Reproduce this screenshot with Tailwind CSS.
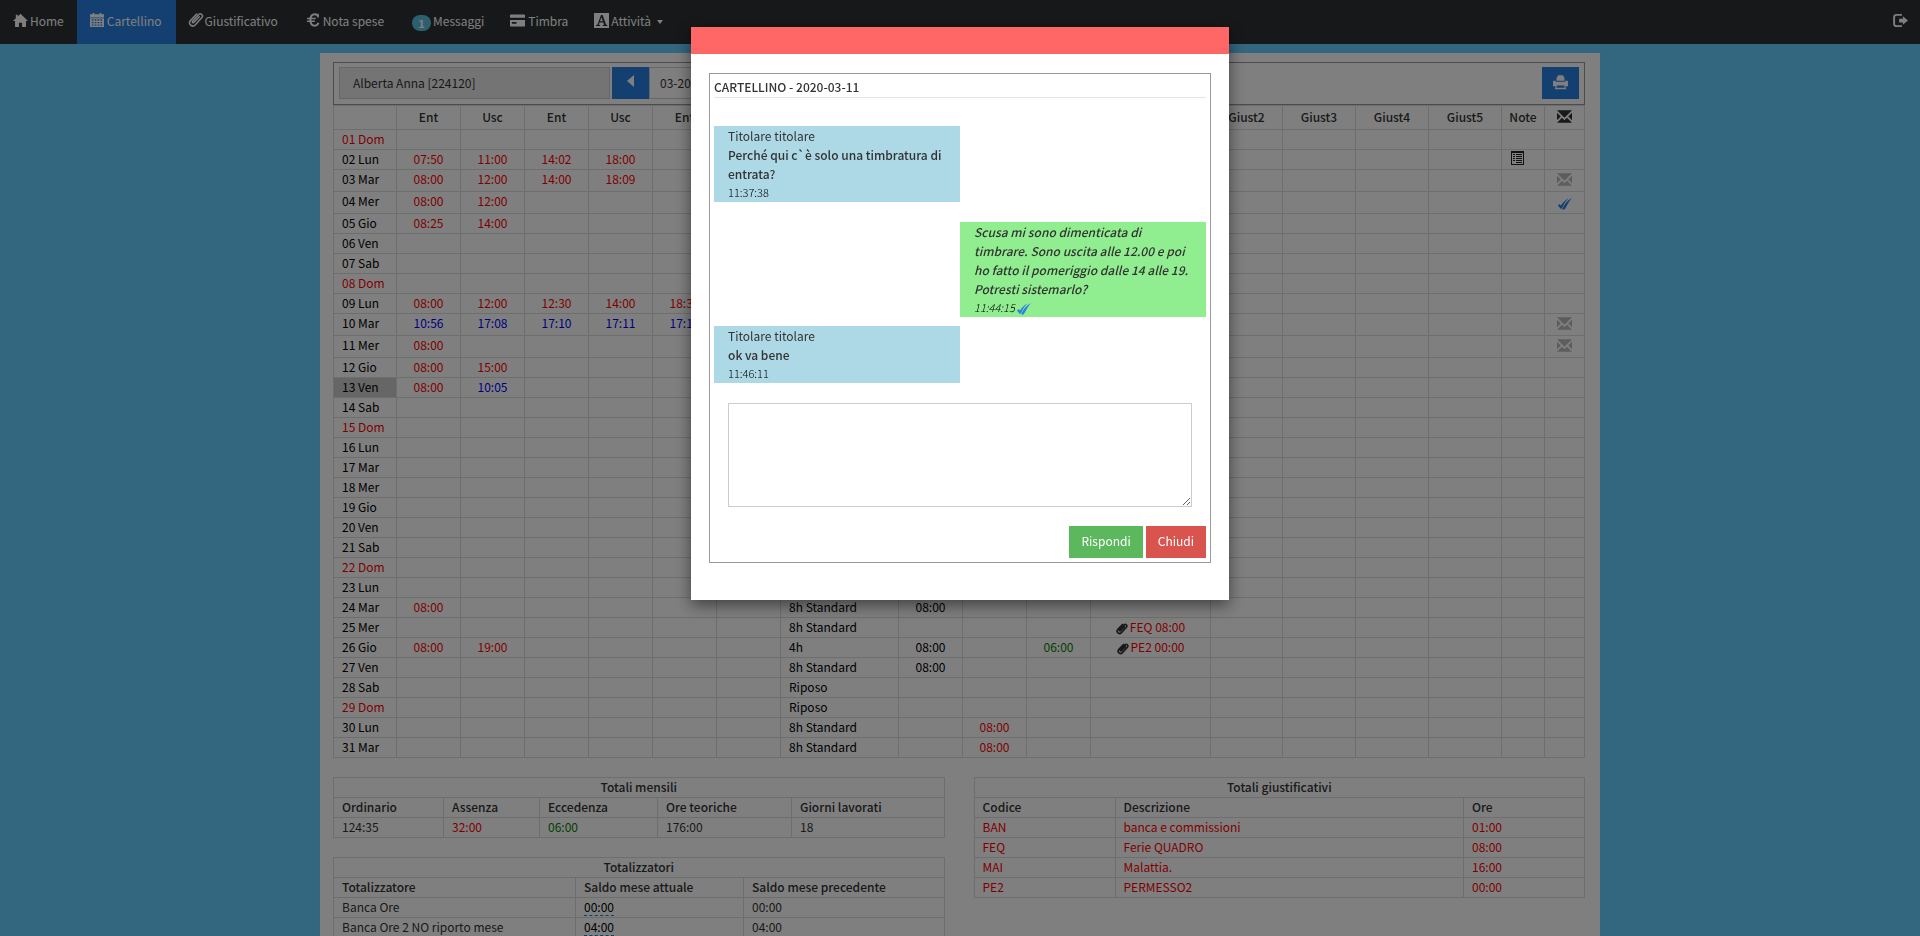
<!DOCTYPE html>
<html lang="it">
<head>
<meta charset="utf-8">
<meta name="viewport" content="width=device-width, initial-scale=1">
<title>Cartellino</title>
<script src="https://cdn.jsdelivr.net/npm/@tailwindcss/browser@4"></script>
</head>
<body class="h-screen overflow-hidden bg-[#66ccff] font-['Noto_Sans_CJK_SC','Source_Sans_Pro',sans-serif] text-xs leading-[19px] text-[#333]">

<svg class="hidden" aria-hidden="true">
  <symbol id="i-home" viewBox="0 0 16 16"><path d="M8 .8 16 8.6h-2.2V15H9.7v-4.6H6.3V15H2.2V8.6H0L3 5.6V1.8h2v1.9z"/></symbol>
  <symbol id="i-cal" viewBox="0 0 16 16"><path fill-rule="evenodd" d="M3 0h2v1.500h6V0h2v1.500h3V5H0V1.500h3zM0 6h16v10H0zM2 7.200v1.600h2V7.200zm3.300 0v1.600h2V7.200zm3.300 0v1.600h2V7.200zm3.300 0v1.600h2V7.200zM2 10.200v1.600h2v-1.600zm3.300 0v1.600h2v-1.600zm3.300 0v1.600h2v-1.600zm3.300 0v1.600h2v-1.600zM2 13.200v1.400h2v-1.400zm3.300 0v1.400h2v-1.400zm3.300 0v1.400h2v-1.400zm3.300 0v1.400h2v-1.400z"/></symbol>
  <symbol id="i-clip" viewBox="0 0 16 16"><path fill="none" stroke="currentColor" stroke-width="1.500" stroke-linecap="round" d="M11.300 4.800 6 10.300c-.9.900-2.200-.3-1.300-1.300L10.800 2.500c1.800-1.900 5 .9 3.100 3.100L7.200 12.900c-2.800 3-7.700-.9-4.700-4.500L8.700 2"/></symbol>
  <symbol id="i-clip-bold" viewBox="0 0 16 16"><path fill="none" stroke="currentColor" stroke-width="2.200" stroke-linecap="round" d="M11.300 4.800 6 10.300c-.9.900-2.200-.3-1.300-1.300L10.800 2.500c1.800-1.900 5 .9 3.100 3.100L7.200 12.900c-2.800 3-7.700-.9-4.700-4.500L8.700 2"/></symbol>
  <symbol id="i-euro" viewBox="0 0 16 16"><path fill="none" stroke="currentColor" stroke-width="2.200" d="M14 4.200C13.300 2.300 12 1.500 10 1.500 6.800 1.500 5 4 5 8s1.800 6.500 5 6.500c2.200 0 3.600-1.100 4.200-3.300"/><path d="M1.500 5.500h10l-.8 1.700H.7zM1.500 8.600h9l-.8 1.700h-9z"/><path d="M13 .8h1.600v4.400H13z"/></symbol>
  <symbol id="i-card" viewBox="0 0 16 16"><path fill-rule="evenodd" d="M1 1.500h14a1 1 0 0 1 1 1V5H0V2.500a1 1 0 0 1 1-1zM0 7.500h16v6a1 1 0 0 1-1 1H1a1 1 0 0 1-1-1zM2 9.500v2h5v-2z"/></symbol>
  <symbol id="i-font" viewBox="0 0 16 16"><path fill-rule="evenodd" d="M0 0h16v16H0zM7.400 2 3.700 12.400l-1.500.5v1h4.300v-1l-1.400-.5.800-2.400h4l.9 2.400-1.400.5v1h4.900v-1l-1.400-.5L9.200 2zM7.900 4.600 9.500 8.800H6.400z"/></symbol>
  <symbol id="i-out" viewBox="0 0 16 16"><path fill="none" stroke="currentColor" stroke-width="2" d="M9.500 2H3.500A2.300 2.300 0 0 0 1.200 4.300v7.400A2.300 2.300 0 0 0 3.500 14h6"/><path d="M10.500 3.500 16 8l-5.500 4.500V10H6.500V6h4z"/></symbol>
  <symbol id="i-print" viewBox="0 0 16 16"><path d="M5.500.2h5L12.200 3v3H3.800V3z"/><path fill-rule="evenodd" d="M1 6h2V7.200h10V6h2a1 1 0 0 1 1 1v5H13.200l1 3.300H1.800l1-3.300H0V7a1 1 0 0 1 1-1zM4.100 11.300 3.500 13.600h9l-.6-2.300z"/></symbol>
  <symbol id="i-mail" viewBox="0 0 1200 1200"><path transform="matrix(1 0 0 -1 0 1200)" d="M25 1100h1150q10 0 12.500 -5t-5.500 -13l-564 -567q-8 -8 -18 -8t-18 8l-564 567q-8 8 -5.500 13t12.500 5zM18 882l264 -264q8 -8 8 -18t-8 -18l-264 -264q-8 -8 -13 -5.500t-5 12.500v550q0 10 5 12.500t13 -5.500zM918 618l264 264q8 8 13 5.500t5 -12.500v-550q0 -10 -5 -12.500t-13 5.500l-264 264q-8 8 -8 18t8 18zM818 482l364 -364q8 -8 5.500 -13t-12.500 -5h-1150q-10 0 -12.500 5t5.500 13l364 364q8 8 18 8t18 -8l164 -164q8 -8 18 -8t18 8l164 164q8 8 18 8t18 -8z"/></symbol>
  <symbol id="i-list" viewBox="0 0 13 14"><path fill-rule="evenodd" d="M0 0h13v14H0zM1 2v11h11V2z"/><path d="M2 3h2v1H2zm3 0h6v1H5zM2 5h2v1H2zm3 0h6v1H5zM2 7h2v1H2zm3 0h6v1H5zM2 9h2v1H2zm3 0h6v1H5zm0 2h6v1H5z"/></symbol>
  <symbol id="i-check" viewBox="0 0 14 12"><path d="M0 7.500 1.500 6 3 7.500C5 4.500 7.200 2.200 10.500.6 7.800 3.200 5.600 6.300 4 10.600L2.600 10.800z"/><path d="M4.600 10.600C6.300 6.500 9 2.900 13.800 0 10.800 3.500 9.200 7.200 6.600 11.600H4z"/></symbol>
</svg>

<nav class="flex h-11 items-stretch justify-between bg-[#2c3032] text-white">
  <div class="flex">
    <a href="#" class="flex items-center px-[13px] pb-1"><svg class="size-[15px] fill-current"><use href="#i-home"/></svg><span class="pl-0.5">Home</span></a>
    <a href="#" class="flex items-center bg-[#2780e3] pl-[13px] pr-3.5 pb-1"><svg class="size-3.5 fill-current"><use href="#i-cal"/></svg><span class="pl-[3px]">Cartellino</span></a>
    <a href="#" class="flex items-center pl-3 pr-[13px] pb-1"><svg class="size-4 fill-current"><use href="#i-clip"/></svg><span class="pl-px">Giustificativo</span></a>
    <a href="#" class="flex items-center px-[15px] pb-1"><svg class="size-3.5 fill-current"><use href="#i-euro"/></svg><span class="pl-[3px]">Nota spese</span></a>
    <a href="#" class="flex items-center px-[13px] pb-1"><span class="mt-1.5 flex h-4 w-[19px] items-center justify-center rounded-full bg-[#5bc0de] text-[11px] font-bold">1</span><span class="pl-0.5">Messaggi</span></a>
    <a href="#" class="flex items-center px-[13px] pb-1"><svg class="size-[15px] fill-current"><use href="#i-card"/></svg><span class="pl-[3px]">Timbra</span></a>
    <a href="#" class="flex items-center px-[13px] pb-1"><svg class="size-[15px] fill-current"><use href="#i-font"/></svg><span class="pl-0.5">Attività</span><span class="ml-1.5 mt-1 border-x-[3px] border-t-[4px] border-x-transparent border-t-white"></span></a>
  </div>
  <a href="#" aria-label="Esci" class="flex items-center px-3 pb-[3px]"><svg class="size-[15px] fill-current"><use href="#i-out"/></svg></a>
</nav>

<main class="mx-auto mt-[9px] min-h-screen w-full max-w-[1280px] bg-white pl-[13px] pr-[15px] pt-[9px]">
  <form class="flex h-[43px] items-start border border-[#999] px-[5px] py-1">
    <input aria-label="Dipendente" readonly value="Alberta Anna [224120]" class="h-8 w-[271px] border border-[#ccc] bg-[#e8e8e8] px-[13px] pb-0.5">
    <button type="button" aria-label="Mese precedente" class="ml-0.5 flex h-8 w-[37px] items-center justify-center bg-[#2780e3]"><span class="mb-1 border-y-[6px] border-r-[7px] border-y-transparent border-r-white"></span></button>
    <input aria-label="Mese" value="03-2020" class="h-8 w-28 border border-[#ccc] px-2.5 pb-0.5">
    <button type="button" aria-label="Stampa" class="ml-auto flex h-8 w-[37px] items-center justify-center bg-[#2780e3] pb-0.5 text-white"><svg class="size-[15px] fill-current"><use href="#i-print"/></svg></button>
  </form>

  <table class="w-full table-fixed border-collapse leading-[17px] text-black [&_td]:border [&_td]:border-[#ddd] [&_td]:p-0 [&_td]:pb-0.5 [&_td]:align-top [&_th]:border [&_th]:border-[#ddd] [&_th]:p-0 [&_th]:pb-0.5 [&_th]:font-medium">
    <colgroup>
      <col class="w-[63px]"><col class="w-16"><col class="w-16"><col class="w-16"><col class="w-16"><col class="w-16"><col class="w-16"><col class="w-[118px]"><col class="w-16"><col class="w-16"><col class="w-16"><col class="w-[120px]"><col class="w-[72px]"><col class="w-[73px]"><col class="w-[73px]"><col class="w-[73px]"><col class="w-[43px]"><col>
    </colgroup>
    <thead>
      <tr class="h-6 text-[#333]"><th></th><th>Ent</th><th>Usc</th><th>Ent</th><th>Usc</th><th>Ent</th><th>Usc</th><th>Orario</th><th>Teo</th><th>Ass</th><th>Ecc</th><th>Giust1</th><th>Giust2</th><th>Giust3</th><th>Giust4</th><th>Giust5</th><th>Note</th><th><svg role="img" aria-label="Messaggi" class="mx-auto size-[15px] fill-current"><use href="#i-mail"/></svg></th></tr>
    </thead>
    <tbody id="days"></tbody>
  </table>

  <div class="mt-[19px] grid grid-cols-2 items-start gap-[29px]">
    <div>
      <table class="w-full table-fixed border-collapse text-left leading-[17px] [&_td]:border [&_td]:border-[#ddd] [&_td]:px-2 [&_td]:pt-0 [&_td]:pb-0.5 [&_th]:border [&_th]:border-[#ddd] [&_th]:px-2 [&_th]:pt-0 [&_th]:pb-0.5 [&_th]:font-medium">
        <colgroup><col class="w-[110px]"><col class="w-24"><col class="w-[118px]"><col class="w-[134px]"><col></colgroup>
        <tr><th colspan="5" class="text-center">Totali mensili</th></tr>
        <tr><th>Ordinario</th><th>Assenza</th><th>Eccedenza</th><th>Ore teoriche</th><th>Giorni lavorati</th></tr>
        <tr><td>124:35</td><td class="text-[#f00]">32:00</td><td class="text-[#008000]">06:00</td><td>176:00</td><td>18</td></tr>
      </table>
      <table class="mt-[19px] w-full table-fixed border-collapse text-left leading-[17px] [&_td]:border [&_td]:border-[#ddd] [&_td]:px-2 [&_td]:pt-0 [&_td]:pb-0.5 [&_th]:border [&_th]:border-[#ddd] [&_th]:px-2 [&_th]:pt-0 [&_th]:pb-0.5 [&_th]:font-medium">
        <colgroup><col class="w-[242px]"><col class="w-[168px]"><col></colgroup>
        <tr><th colspan="3" class="text-center">Totalizzatori</th></tr>
        <tr><th>Totalizzatore</th><th>Saldo mese attuale</th><th>Saldo mese precedente</th></tr>
        <tr><td>Banca Ore</td><td><a href="#" class="-mb-px inline-block h-[18px] border-b border-dashed border-[#0088cc] align-top text-black">00:00</a></td><td>00:00</td></tr>
        <tr><td>Banca Ore 2 NO riporto mese</td><td><a href="#" class="-mb-px inline-block h-[18px] border-b border-dashed border-[#0088cc] align-top text-black">04:00</a></td><td>04:00</td></tr>
      </table>
    </div>
    <table class="w-full table-fixed border-collapse text-left leading-[17px] [&_td]:border [&_td]:border-[#ddd] [&_td]:px-2 [&_td]:pt-0 [&_td]:pb-0.5 [&_td]:text-[#f00] [&_th]:border [&_th]:border-[#ddd] [&_th]:px-2 [&_th]:pt-0 [&_th]:pb-0.5 [&_th]:font-medium">
      <colgroup><col class="w-[141px]"><col><col class="w-[121px]"></colgroup>
      <tr><th colspan="3" class="text-center">Totali giustificativi</th></tr>
      <tr><th>Codice</th><th>Descrizione</th><th>Ore</th></tr>
      <tr><td>BAN</td><td>banca e commissioni</td><td>01:00</td></tr>
      <tr><td>FEQ</td><td>Ferie QUADRO</td><td>08:00</td></tr>
      <tr><td>MAI</td><td>Malattia.</td><td>16:00</td></tr>
      <tr><td>PE2</td><td>PERMESSO2</td><td>00:00</td></tr>
    </table>
  </div>
</main>

<div class="fixed inset-0 bg-black/50"></div>

<div class="fixed inset-0 flex items-start justify-center pt-[27px]">
  <section role="dialog" aria-modal="true" aria-labelledby="dlg-title" class="w-[538px] bg-white pb-[37px] shadow-[0_5px_15px_rgba(0,0,0,0.5)]">
    <div class="h-[27px] bg-[#ff6666]"></div>
    <div class="mx-[18px] mt-[19px] border border-[#999] px-1 pb-1 pt-1">
      <h1 id="dlg-title" class="border-b border-[#e5e5e5] pb-0.5 font-medium leading-[17px]">CARTELLINO - 2020-03-11</h1>
      <div class="mt-7 w-1/2 bg-[#add8e6] px-3.5">
        <p>Titolare titolare</p>
        <p class="font-medium">Perché qui c`è solo una timbratura di entrata?</p>
        <p class="text-[11px] leading-[19px] font-light text-black">11:37:38</p>
      </div>
      <div class="ml-auto mt-5 w-1/2 bg-[#90ee90] px-3.5 italic">
        <p class="font-medium">Scusa mi sono dimenticata di timbrare. Sono uscita alle 12.00 e poi ho fatto il pomeriggio dalle 14 alle 19. Potresti sistemarlo?</p>
        <p class="flex items-center gap-0.5 text-[11px] leading-[19px] font-light text-black">11:44:15 <svg class="mt-0.5 h-3 w-3.5 fill-[#2780e3]"><use href="#i-check"/></svg></p>
      </div>
      <div class="mt-[9px] w-1/2 bg-[#add8e6] px-3.5">
        <p>Titolare titolare</p>
        <p class="font-medium">ok va bene</p>
        <p class="text-[11px] leading-[19px] font-light text-black">11:46:11</p>
      </div>
      <div class="mt-5 px-3.5"><textarea aria-label="Risposta" class="block h-[104px] w-full resize border border-[#ccc] bg-white p-2"></textarea></div>
      <div class="mt-[19px] flex justify-end gap-[3px] text-white">
        <button type="button" class="h-8 bg-[#5cb85c] px-3 pb-[3px]">Rispondi</button>
        <button type="button" class="h-8 bg-[#d9534f] px-3 pb-[3px]">Chiudi</button>
      </div>
    </div>
  </section>
</div>

<script>
const names = ['Dom', 'Lun', 'Mar', 'Mer', 'Gio', 'Ven', 'Sab'];
const R = 'text-center text-[#f00]', B = 'text-center text-[#00f]', K = 'text-center', G = 'text-center text-[#008000]';
const mail = '<svg class="mx-auto mt-0.5 size-[15px] fill-[#bbb]"><use href="#i-mail"/></svg>';
const clip = '<svg class="mr-0.5 inline size-3 text-[#333]"><use href="#i-clip-bold"/></svg>';
// day -> { column: [class, content] }
const data = {
  2: {1: [R, '07:50'], 2: [R, '11:00'], 3: [R, '14:02'], 4: [R, '18:00'], 16: ['', '<svg class="ml-[9px] mt-px h-3.5 w-[13px] fill-[#222]"><use href="#i-list"/></svg>']},
  3: {1: [R, '08:00'], 2: [R, '12:00'], 3: [R, '14:00'], 4: [R, '18:09'], 17: ['', mail]},
  4: {1: [R, '08:00'], 2: [R, '12:00'], 17: ['', '<svg class="mx-auto mt-1.5 h-3 w-3.5 fill-[#2780e3]"><use href="#i-check"/></svg>']},
  5: {1: [R, '08:25'], 2: [R, '14:00']},
  9: {1: [R, '08:00'], 2: [R, '12:00'], 3: [R, '12:30'], 4: [R, '14:00'], 5: [R, '18:30']},
  10: {1: [B, '10:56'], 2: [B, '17:08'], 3: [B, '17:10'], 4: [B, '17:11'], 5: [B, '17:12'], 17: ['', mail]},
  11: {1: [R, '08:00'], 17: ['', mail]},
  12: {1: [R, '08:00'], 2: [R, '15:00']},
  13: {1: [R, '08:00'], 2: [B, '10:05']},
  24: {1: [R, '08:00'], 7: ['', '8h Standard'], 8: [K, '08:00']},
  25: {7: ['', '8h Standard'], 11: [R, clip + 'FEQ 08:00']},
  26: {1: [R, '08:00'], 2: [R, '19:00'], 7: ['', '4h'], 8: [K, '08:00'], 10: [G, '06:00'], 11: [R, clip + 'PE2 00:00']},
  27: {7: ['', '8h Standard'], 8: [K, '08:00']},
  28: {7: ['', 'Riposo']},
  29: {7: ['', 'Riposo']},
  30: {7: ['', '8h Standard'], 9: [R, '08:00']},
  31: {7: ['', '8h Standard'], 9: [R, '08:00']}
};
let html = '';
for (let d = 1; d <= 31; d++) {
  const name = names[(d - 1) % 7];
  const tall = [3, 4, 10, 11].includes(d);
  const day = name === 'Dom' ? 'text-[#f00]' : d === 13 ? 'bg-[#ccc]' : '';
  html += `<tr class="${tall ? 'h-[22px]' : 'h-5'}"><td class="${day}"><span class="pl-2">${String(d).padStart(2, '0')} ${name}</span></td>`;
  for (let c = 1; c < 18; c++) {
    const [cls, content] = (data[d] || {})[c] || ['', ''];
    html += `<td class="${cls}">${c === 7 ? `<span class="pl-2">${content}</span>` : content}</td>`;
  }
  html += '</tr>';
}
document.getElementById('days').innerHTML = html;
</script>
</body>
</html>
